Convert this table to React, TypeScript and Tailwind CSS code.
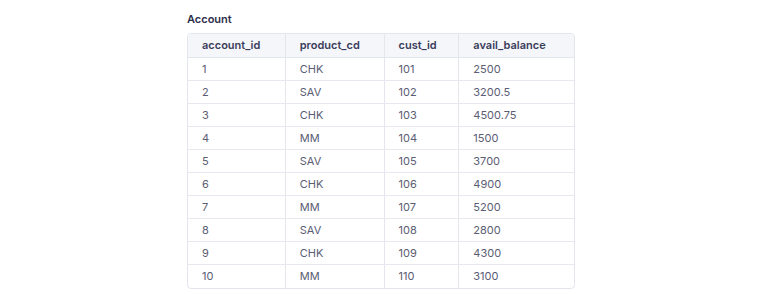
import React from "react";

const rows = [
  ["1", "CHK", "101", "2500"],
  ["2", "SAV", "102", "3200.5"],
  ["3", "CHK", "103", "4500.75"],
  ["4", "MM", "104", "1500"],
  ["5", "SAV", "105", "3700"],
  ["6", "CHK", "106", "4900"],
  ["7", "MM", "107", "5200"],
  ["8", "SAV", "108", "2800"],
  ["9", "CHK", "109", "4300"],
  ["10", "MM", "110", "3100"],
];

const widths = ["w-[98px]", "w-[99px]", "w-[75px]", "w-[115px]"];
const headers = ["account_id", "product_cd", "cust_id", "avail_balance"];

export default function App() {
  return (
    <div className="w-[768px] h-[294px] bg-white pl-[187px] pt-[12px]" style={{ fontFamily: "Inter, 'Noto Sans', sans-serif" }}>
      <div className="text-[11px] font-semibold text-[#2d2f4a] leading-[14px] mb-[7px]">Account</div>
      <div className="w-[388px] border border-[#e4e6ee] rounded-[4px] overflow-hidden">
        <div className="flex h-[24px] bg-[#f5f6fa] border-b border-[#e4e6ee]">
          {headers.map((h, i) => (
            <div key={h} className={`${widths[i]} flex items-center pl-[14px] text-[11px] font-semibold text-[#3a3d5a] ${i < 3 ? "border-r border-[#e4e6ee]" : ""}`}>
              {h}
            </div>
          ))}
        </div>
        {rows.map((r, ri) => (
          <div key={ri} className={`flex h-[23px] ${ri < rows.length - 1 ? "border-b border-[#e8e9f0]" : ""}`}>
            {r.map((c, i) => (
              <div key={i} className={`${widths[i]} flex items-center pl-[14px] text-[11px] text-[#5a5d73] ${i < 3 ? "border-r border-[#e4e6ee]" : ""}`}>
                {c}
              </div>
            ))}
          </div>
        ))}
      </div>
    </div>
  );
}
